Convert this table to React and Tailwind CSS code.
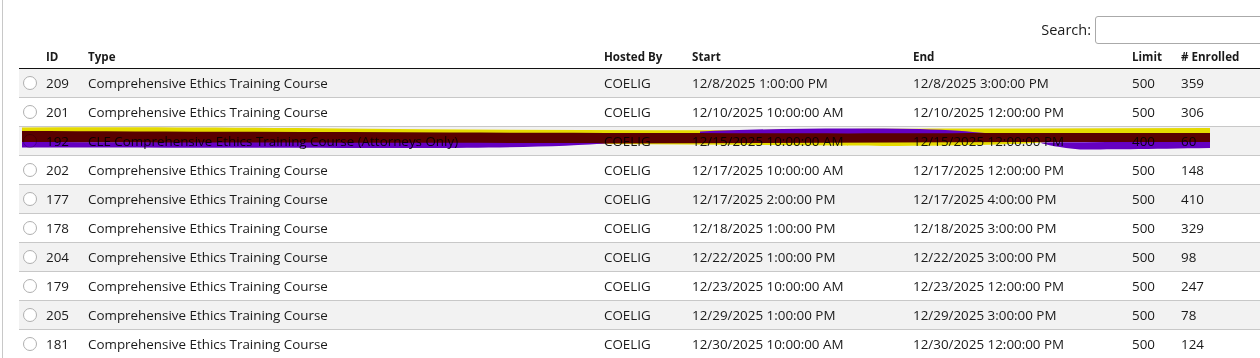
import React from "react";

const rows = [
  { id: 209, type: "Comprehensive Ethics Training Course", host: "COELIG", start: "12/8/2025 1:00:00 PM", end: "12/8/2025 3:00:00 PM", limit: 500, enrolled: 359 },
  { id: 201, type: "Comprehensive Ethics Training Course", host: "COELIG", start: "12/10/2025 10:00:00 AM", end: "12/10/2025 12:00:00 PM", limit: 500, enrolled: 306 },
  { id: 192, type: "CLE Comprehensive Ethics Training Course (Attorneys Only)", host: "COELIG", start: "12/15/2025 10:00:00 AM", end: "12/15/2025 12:00:00 PM", limit: 400, enrolled: 60 },
  { id: 202, type: "Comprehensive Ethics Training Course", host: "COELIG", start: "12/17/2025 10:00:00 AM", end: "12/17/2025 12:00:00 PM", limit: 500, enrolled: 148 },
  { id: 177, type: "Comprehensive Ethics Training Course", host: "COELIG", start: "12/17/2025 2:00:00 PM", end: "12/17/2025 4:00:00 PM", limit: 500, enrolled: 410 },
  { id: 178, type: "Comprehensive Ethics Training Course", host: "COELIG", start: "12/18/2025 1:00:00 PM", end: "12/18/2025 3:00:00 PM", limit: 500, enrolled: 329 },
  { id: 204, type: "Comprehensive Ethics Training Course", host: "COELIG", start: "12/22/2025 1:00:00 PM", end: "12/22/2025 3:00:00 PM", limit: 500, enrolled: 98 },
  { id: 179, type: "Comprehensive Ethics Training Course", host: "COELIG", start: "12/23/2025 10:00:00 AM", end: "12/23/2025 12:00:00 PM", limit: 500, enrolled: 247 },
  { id: 205, type: "Comprehensive Ethics Training Course", host: "COELIG", start: "12/29/2025 1:00:00 PM", end: "12/29/2025 3:00:00 PM", limit: 500, enrolled: 78 },
  { id: 181, type: "Comprehensive Ethics Training Course", host: "COELIG", start: "12/30/2025 10:00:00 AM", end: "12/30/2025 12:00:00 PM", limit: 500, enrolled: 124 },
];

// marker scribble drawn over the redacted row
const Scribble = () => (
  <svg
    className="absolute left-0 top-0 pointer-events-none mix-blend-multiply"
    width="1260"
    height="358"
    viewBox="0 0 1260 358"
  >
    <path
      d="M22,127.5 C120,127 220,127.5 340,128.5 C480,130 620,130.5 760,130 C820,129 900,128.5 1000,128.5 L1210,128 L1210,141 L1050,142 C1000,146 900,146.5 840,145.5 L600,144 L22,142 Z"
      fill="#f2e600"
    />
    <path
      d="M22,131 C150,131.5 300,132 450,132.5 C650,133 850,133 1000,133 L1210,133 L1210,142 C1000,141.5 800,143 600,143.5 C400,143.5 200,143 22,142.5 Z"
      fill="#5e0000"
    />
    <path
      d="M22,142 C200,142.5 400,143 610,143 C570,146.5 500,148 420,148 C300,148 150,147.5 22,147.5 Z"
      fill="#6a00cc"
    />
    <path
      d="M1040,142.5 C1100,142 1160,142 1210,142 L1210,148 C1150,149 1100,149.5 1080,149.5 C1060,147.5 1045,145 1040,142.5 Z"
      fill="#6a00cc"
    />
    <path
      d="M700,131.5 C760,128.5 840,128 920,129 C950,130 970,131.5 985,133 C900,133.5 800,133.5 700,133 Z"
      fill="#6a00cc"
    />
  </svg>
);

const Radio = () => (
  <span className="block w-[14px] h-[14px] rounded-full border border-[#b0b0b0] bg-white" />
);

export default function App() {
  return (
    <div
      className="relative w-[1260px] h-[358px] overflow-hidden bg-white text-[#1a1a1a]"
      style={{ fontFamily: '"Open Sans", "Noto Sans", sans-serif' }}
    >
      <div className="flex h-full">
        <div className="w-[2px] shrink-0" />
        <div className="w-px shrink-0 bg-[#c8c8c8]" />
        <div className="pl-[16px] shrink-0">
          <div className="w-[1244px]">
            <div className="flex justify-end items-center pt-[15px] h-[44px]">
              <label className="text-[14.5px] mr-[4px]">Search:</label>
              <input
                type="text"
                className="w-[168px] h-[28px] border border-[#aaa] rounded-[3px] bg-white outline-none"
              />
            </div>
            <table className="table-fixed border-collapse w-[1244px] text-[13.4px]">
              <colgroup>
                <col className="w-[19px]" />
                <col className="w-[42px]" />
                <col className="w-[516px]" />
                <col className="w-[88px]" />
                <col className="w-[221px]" />
                <col className="w-[219px]" />
                <col className="w-[49px]" />
                <col className="w-[90px]" />
              </colgroup>
              <thead>
                <tr className="h-[24px] border-b border-[#111] text-left text-[11.6px] font-bold">
                  <th />
                  <th className="pl-[8px] pt-[1px]">ID</th>
                  <th className="pl-[8px] pt-[1px]">Type</th>
                  <th className="pl-[8px] pt-[1px]">Hosted By</th>
                  <th className="pl-[8px] pt-[1px]">Start</th>
                  <th className="pl-[8px] pt-[1px]">End</th>
                  <th className="pl-[8px] pt-[1px]">Limit</th>
                  <th className="pl-[8px] pt-[1px] whitespace-nowrap"># Enrolled</th>
                </tr>
              </thead>
              <tbody>
                {rows.map((r, i) => (
                  <tr
                    key={r.id}
                    className={`h-[29px] border-b border-[#c8c8c8] ${i % 2 === 0 ? "bg-[#f2f2f2]" : "bg-white"}`}
                  >
                    <td className="pl-[4px] pt-[1px]">
                      <Radio />
                    </td>
                    <td className="pl-[8px] pt-[1px]">{r.id}</td>
                    <td className="pl-[8px] pt-[1px] whitespace-nowrap">{r.type}</td>
                    <td className="pl-[8px] pt-[1px]">{r.host}</td>
                    <td className="pl-[8px] pt-[1px] whitespace-nowrap">{r.start}</td>
                    <td className="pl-[8px] pt-[1px] whitespace-nowrap">{r.end}</td>
                    <td className="pl-[8px] pt-[1px]">{r.limit}</td>
                    <td className="pl-[8px] pt-[1px]">{r.enrolled}</td>
                  </tr>
                ))}
              </tbody>
            </table>
          </div>
        </div>
      </div>
      <Scribble />
    </div>
  );
}
